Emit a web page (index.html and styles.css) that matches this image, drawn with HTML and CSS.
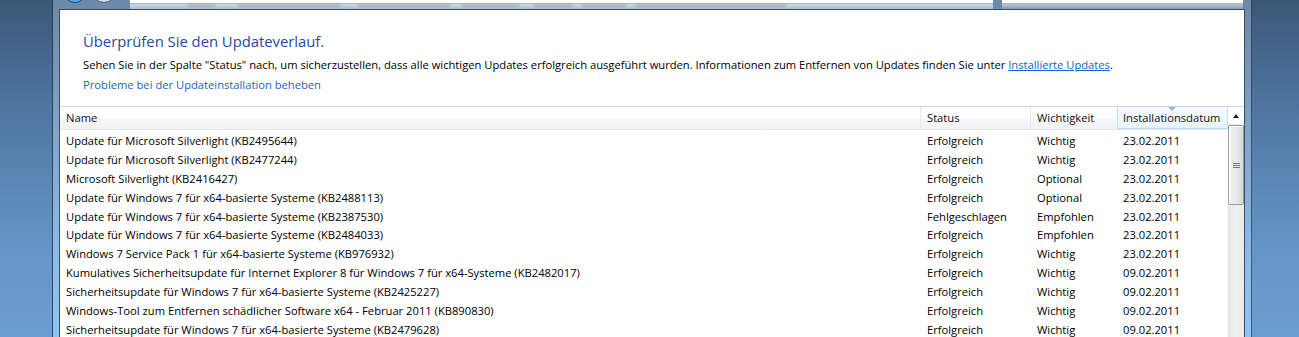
FILE: index.html
```html
<!DOCTYPE html>
<html lang="de">
<head>
<meta charset="utf-8">
<title>Updateverlauf anzeigen</title>
<link rel="stylesheet" href="styles.css">
</head>
<body>
<div class="screen">
  <div class="desk desk-left"></div>
  <div class="window">
    <div class="toolbar">
      <span class="nav nav-back"></span>
      <span class="nav nav-fwd"></span>
      <div class="address">
        <span class="blob b1"></span>
        <span class="blob b2"></span>
        <span class="blob b3"></span>
        <span class="blob b4"></span>
        <span class="blob b5"></span>
        <span class="blob b6"></span>
        <span class="blob b7"></span>
      </div>
      <div class="search"></div>
    </div>
    <div class="content">
      <div class="intro">
        <h1 class="title">Überprüfen Sie den Updateverlauf.</h1>
        <p class="desc">Sehen Sie in der Spalte "Status" nach, um sicherzustellen, dass alle wichtigen Updates erfolgreich ausgeführt wurden. Informationen zum Entfernen von Updates finden Sie unter <a class="link-inline" href="#">Installierte Updates</a>.</p>
        <a class="link" href="#">Probleme bei der Updateinstallation beheben</a>
      </div>
      <div class="list">
        <div class="table">
          <div class="grid head">
            <div class="hcell hname">Name</div>
            <div class="hcell hsep">Status</div>
            <div class="hcell hsep">Wichtigkeit</div>
            <div class="hcell hsorted"><span class="sort-arrow"></span>Installationsdatum</div>
          </div>
          <div class="rows">
            <div class="grid row"><div class="c-name">Update für Microsoft Silverlight (KB2495644)</div><div class="c-st">Erfolgreich</div><div class="c-wi">Wichtig</div><div class="c-dt">23.02.2011</div></div>
            <div class="grid row"><div class="c-name">Update für Microsoft Silverlight (KB2477244)</div><div class="c-st">Erfolgreich</div><div class="c-wi">Wichtig</div><div class="c-dt">23.02.2011</div></div>
            <div class="grid row"><div class="c-name">Microsoft Silverlight (KB2416427)</div><div class="c-st">Erfolgreich</div><div class="c-wi">Optional</div><div class="c-dt">23.02.2011</div></div>
            <div class="grid row"><div class="c-name">Update für Windows 7 für x64-basierte Systeme (KB2488113)</div><div class="c-st">Erfolgreich</div><div class="c-wi">Optional</div><div class="c-dt">23.02.2011</div></div>
            <div class="grid row"><div class="c-name">Update für Windows 7 für x64-basierte Systeme (KB2387530)</div><div class="c-st">Fehlgeschlagen</div><div class="c-wi">Empfohlen</div><div class="c-dt">23.02.2011</div></div>
            <div class="grid row"><div class="c-name">Update für Windows 7 für x64-basierte Systeme (KB2484033)</div><div class="c-st">Erfolgreich</div><div class="c-wi">Empfohlen</div><div class="c-dt">23.02.2011</div></div>
            <div class="grid row"><div class="c-name">Windows 7 Service Pack 1 für x64-basierte Systeme (KB976932)</div><div class="c-st">Erfolgreich</div><div class="c-wi">Wichtig</div><div class="c-dt">23.02.2011</div></div>
            <div class="grid row"><div class="c-name">Kumulatives Sicherheitsupdate für Internet Explorer 8 für Windows 7 für x64-Systeme (KB2482017)</div><div class="c-st">Erfolgreich</div><div class="c-wi">Wichtig</div><div class="c-dt">09.02.2011</div></div>
            <div class="grid row"><div class="c-name">Sicherheitsupdate für Windows 7 für x64-basierte Systeme (KB2425227)</div><div class="c-st">Erfolgreich</div><div class="c-wi">Wichtig</div><div class="c-dt">09.02.2011</div></div>
            <div class="grid row"><div class="c-name">Windows-Tool zum Entfernen schädlicher Software x64 - Februar 2011 (KB890830)</div><div class="c-st">Erfolgreich</div><div class="c-wi">Wichtig</div><div class="c-dt">09.02.2011</div></div>
            <div class="grid row"><div class="c-name">Sicherheitsupdate für Windows 7 für x64-basierte Systeme (KB2479628)</div><div class="c-st">Erfolgreich</div><div class="c-wi">Wichtig</div><div class="c-dt">09.02.2011</div></div>
          </div>
        </div>
        <div class="scroll">
          <div class="scroll-up"><span class="up-arrow"></span></div>
          <div class="thumb"><span class="grip"></span></div>
        </div>
      </div>
    </div>
  </div>
  <div class="desk desk-right"></div>
</div>
</body>
</html>
```
FILE: styles.css
```css
* { box-sizing: border-box; }
html, body { margin: 0; padding: 0; }
body {
  font-family: "Open Sans", "Noto Sans", sans-serif;
  font-size: 11.2px;
  color: #000;
  overflow: hidden;
}
.screen {
  width: 1299px;
  height: 337px;
  overflow: hidden;
  display: flex;
  background: linear-gradient(180deg, #3b5877 0%, #4d749e 30%, #6393c4 70%, #6c9fd1 100%);
}
.desk-left { width: 52px; flex: none; }
.desk-right { flex: 1; }

.window {
  width: 1200px;
  flex: none;
  display: flex;
  flex-direction: column;
  padding: 0 6px;
  border-left: 1px solid rgba(18, 32, 52, 0.75);
  border-right: 1px solid rgba(18, 32, 52, 0.65);
  background: linear-gradient(180deg, #6e89a7 0%, #7fa1c6 35%, #8cbbe9 75%, #8fc3f2 100%);
}

/* toolbar (only its bottom edge is visible) */
.toolbar {
  height: 9px;
  flex: none;
  display: flex;
  align-items: flex-start;
  overflow: hidden;
}
.nav {
  width: 24px;
  height: 24px;
  border-radius: 50%;
  margin-top: -21px;
  flex: none;
}
.nav-back {
  margin-left: 4px;
  background: radial-gradient(circle at 50% 70%, #7fd0ff 0%, #2a8ee0 55%, #1b5fa8 100%);
  border: 1px solid #26466a;
}
.nav-fwd {
  margin-left: 5px;
  background: radial-gradient(circle at 50% 70%, #e8eef4 0%, #b7c4d2 60%, #8a9aab 100%);
  border: 1px solid #56667a;
}
.address {
  margin-left: 14px;
  width: 863px;
  height: 9px;
  flex: none;
  display: flex;
  align-items: flex-start;
  padding-top: 4px;
  background: linear-gradient(180deg, #ffffff 0, #ffffff 3px, #a9b6c4 3px, #a9b6c4 4px, rgba(235, 242, 249, 0.75) 4px, rgba(220, 232, 244, 0.55) 9px);
}
.blob {
  height: 3px;
  background: rgba(90, 105, 125, 0.28);
  filter: blur(1.3px);
  border-radius: 2px;
  flex: none;
}
.b1 { margin-left: 58px; width: 28px; }
.b2 { margin-left: 22px; width: 102px; }
.b3 { margin-left: 18px; width: 92px; }
.b4 { margin-left: 12px; width: 58px; }
.b5 { margin-left: 14px; width: 38px; }
.b6 { margin-left: 10px; width: 44px; }
.b7 { margin-left: 10px; width: 150px; }
.search {
  margin-left: 9px;
  width: 241px;
  height: 9px;
  flex: none;
  background: linear-gradient(180deg, #ffffff 0, #ffffff 3px, #a9b6c4 3px, #a9b6c4 4px, rgba(235, 242, 249, 0.6) 4px, rgba(220, 232, 244, 0.2) 9px);
}

/* content pane */
.content {
  flex: 1;
  background: #fff;
  border: 1px solid #3a4c60;
  border-bottom: none;
  display: flex;
  flex-direction: column;
}
.intro {
  padding: 20px 23px 12px;
  border-bottom: 1px solid #d5d5d5;
}
.title {
  margin: 0;
  font-size: 14.8px;
  line-height: 22px;
  font-weight: 400;
  color: #1f4aa6;
}
.desc {
  margin: 3px 0 0;
  line-height: 19px;
  white-space: nowrap;
}
.link-inline {
  color: #1462cf;
  text-decoration: underline;
}
.link {
  display: block;
  margin-top: 1px;
  line-height: 19px;
  color: #1f62c9;
  text-decoration: none;
}

.list {
  flex: 1;
  display: flex;
  overflow: hidden;
}
.table { width: 1168px; flex: none; }
.grid {
  display: grid;
  grid-template-columns: 860px 110px 87px 111px;
}
.head {
  height: 23px;
  border-bottom: 1px solid #e3e6ea;
  background: linear-gradient(180deg, #ffffff 0%, #ffffff 45%, #f5f6f8 55%, #f2f3f5 100%);
}
.hcell {
  line-height: 22px;
  color: #111;
  white-space: nowrap;
}
.hname { padding-left: 6px; }
.hsep { border-left: 1px solid #e4e8ec; padding-left: 6px; }
.hsorted {
  position: relative;
  padding-left: 5px;
  border-left: 1px solid #c5e0f5;
  border-right: 1px solid #c5e0f5;
  background: linear-gradient(180deg, #f5fafe 0%, #eef7fd 50%, #e6f3fc 100%);
  box-shadow: inset 0 -1px 0 #b9daf2;
}
.sort-arrow {
  position: absolute;
  top: 0;
  left: 50px;
  width: 0;
  height: 0;
  border-left: 4px solid transparent;
  border-right: 4px solid transparent;
  border-top: 4px solid #97b7d3;
}
.rows { padding-top: 2px; }
.row {
  height: 18.9px;
  line-height: 18.9px;
  white-space: nowrap;
}
.c-name { padding-left: 6px; }
.c-st { padding-left: 7px; }
.c-wi { padding-left: 7px; }
.c-dt { padding-left: 6px; }

/* scrollbar */
.scroll {
  width: 16px;
  flex: none;
  display: flex;
  flex-direction: column;
  background: linear-gradient(90deg, #e0e0e0 0, #ececec 3px, #efefef 8px, #ebebeb 16px);
}
.scroll-up {
  height: 17px;
  display: flex;
  align-items: center;
  justify-content: center;
  background: #fff;
}
.up-arrow {
  width: 0;
  height: 0;
  border-left: 3.5px solid transparent;
  border-right: 3.5px solid transparent;
  border-bottom: 4px solid #1e1e1e;
}
.thumb {
  margin: 1px 0 0;
  height: 80px;
  border: 1px solid #9a9a9a;
  border-radius: 2px;
  background: linear-gradient(90deg, #f3f3f3 0%, #e9e9e9 50%, #d8d8d8 100%);
  box-shadow: inset 1px 1px 0 #fff;
  display: flex;
  align-items: center;
  justify-content: center;
}
.grip {
  width: 7px;
  height: 5px;
  background: linear-gradient(180deg, #777 0, #777 1px, transparent 1px, transparent 2px, #777 2px, #777 3px, transparent 3px, transparent 4px, #777 4px, #777 5px);
}
```
